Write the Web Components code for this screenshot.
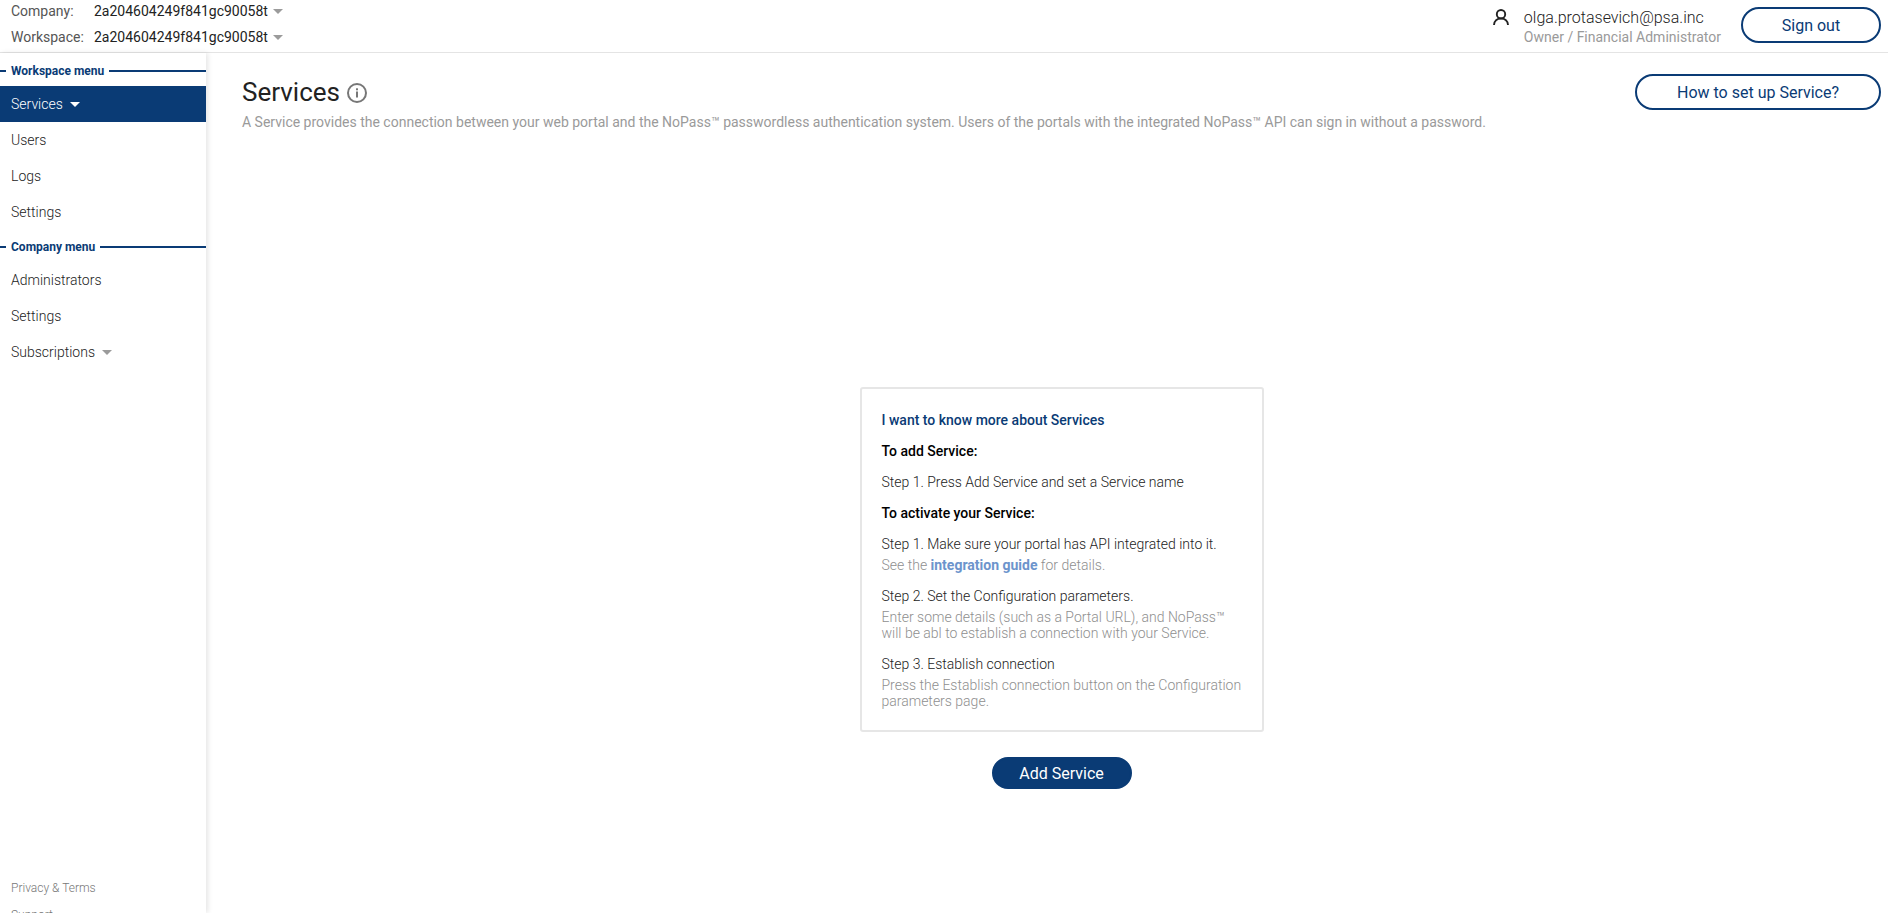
<!DOCTYPE html>
<html lang="en">
<head>
<meta charset="utf-8">
<title>Services</title>
<style>
    html, body {
        margin: 0;
        height: 100%;
        overflow: hidden;
        background: #fff;
        font-family: Roboto, "Liberation Sans", sans-serif;
    }
    body {
        display: flex;
        flex-direction: column;
    }
</style>
</head>
<body>
    <app-header></app-header>
    <div style="display: flex; flex: 1; min-height: 0;">
        <side-nav></side-nav>
        <services-page></services-page>
    </div>

<script>
const caret = (color) => `<svg width="10" height="5" viewBox="0 0 10 5"><path d="M0 0h10L5 5z" fill="${color}"/></svg>`;

class PillButton extends HTMLElement {
    constructor() {
        super();
        this.attachShadow({mode: "open"});
        this.shadowRoot.innerHTML = `
            <style>
                :host {
                    display: inline-flex;
                    box-sizing: border-box;
                    align-items: center;
                    justify-content: center;
                    height: 36px;
                    border: 2px solid #0a3b75;
                    border-radius: 18px;
                    background: #fff;
                    color: #0a3b75;
                    font-size: 16px;
                    cursor: pointer;
                }
                :host([filled]) {
                    height: 32px;
                    background: #0a3b75;
                    color: #fff;
                    border-radius: 16px;
                }
            </style>
            <slot></slot>
        `;
    }
}

class AppHeader extends HTMLElement {
    constructor() {
        super();
        this.attachShadow({mode: "open"});
        this.shadowRoot.innerHTML = `
            <style>
                :host {
                    display: flex;
                    flex: none;
                    box-sizing: border-box;
                    height: 53px;
                    justify-content: space-between;
                    border-bottom: 1px solid #e4e4e4;
                    padding: 0 7px 0 11px;
                }
                .picker {
                    display: grid;
                    grid-template-columns: 83px auto;
                    grid-template-rows: 22px 30px;
                    align-items: center;
                    font-size: 14px;
                    color: #222;
                }
                .picker .key { color: #555; }
                .picker svg { margin-left: 5px; vertical-align: 2px; }
                .user {
                    display: flex;
                    align-items: flex-start;
                }
                .user svg { margin: 9px 15px 0 0; }
                .who {
                    font-size: 16px;
                    font-weight: 300;
                    line-height: 20px;
                    color: #222;
                    margin: 8px 20px 0 0;
                }
                .who small {
                    display: block;
                    font-size: 14px;
                    font-weight: 400;
                    line-height: 18px;
                    color: #9a9a9a;
                }
                pill-button { width: 140px; margin-top: 7px; }
            </style>
            <div class="picker">
                <span class="key">Company:</span><span>2a204604249f841gc90058t${caret("#9b9b9b")}</span>
                <span class="key">Workspace:</span><span>2a204604249f841gc90058t${caret("#9b9b9b")}</span>
            </div>
            <div class="user">
                <svg width="16" height="16" viewBox="0 0 16 16" fill="none" stroke="#222" stroke-width="1.900">
                    <circle cx="8" cy="5.200" r="4.200"/>
                    <path d="M1 16c.2-4 3-6.500 7-6.500s6.800 2.500 7 6.500"/>
                </svg>
                <div class="who">olga.protasevich@psa.inc<small>Owner / Financial Administrator</small></div>
                <pill-button>Sign out</pill-button>
            </div>
        `;
    }
}

class NavHeading extends HTMLElement {
    constructor() {
        super();
        this.attachShadow({mode: "open"});
        this.shadowRoot.innerHTML = `
            <style>
                :host {
                    display: flex;
                    box-sizing: border-box;
                    align-items: center;
                    height: 32px;
                    padding-top: 2px;
                    gap: 5px;
                    font-size: 12px;
                    font-weight: 700;
                    color: #0a3b75;
                }
                :host::before {
                    content: "";
                    width: 6px;
                    height: 2px;
                    background: #0a3b75;
                }
                :host::after {
                    content: "";
                    flex: 1;
                    height: 2px;
                    background: #0a3b75;
                }
            </style>
            <slot></slot>
        `;
    }
}

class NavItem extends HTMLElement {
    constructor() {
        super();
        this.attachShadow({mode: "open"});
        this.shadowRoot.innerHTML = `
            <style>
                :host {
                    display: flex;
                    align-items: center;
                    height: 36px;
                    padding-left: 11px;
                    gap: 7px;
                    font-size: 14px;
                    font-weight: 300;
                    color: #222;
                }
                :host([active]) {
                    background: #0a3b75;
                    color: #fff;
                }
            </style>
            <slot></slot>
        `;
    }
}

class SideNav extends HTMLElement {
    constructor() {
        super();
        this.attachShadow({mode: "open"});
        this.shadowRoot.innerHTML = `
            <style>
                :host {
                    display: flex;
                    flex-direction: column;
                    flex: none;
                    box-sizing: border-box;
                    width: 206px;
                    height: 860px;
                    overflow: hidden;
                    box-shadow: 2px 0 5px rgba(0, 0, 0, 0.1);
                    padding-top: 1px;
                }
                .foot {
                    margin-top: auto;
                    padding-left: 11px;
                    font-size: 12px;
                    font-weight: 300;
                    color: #777;
                    line-height: 27px;
                    height: 38px;
                }
            </style>
            <nav-heading>Workspace menu</nav-heading>
            <nav-item active>Services ${caret("#fff")}</nav-item>
            <nav-item>Users</nav-item>
            <nav-item>Logs</nav-item>
            <nav-item>Settings</nav-item>
            <nav-heading>Company menu</nav-heading>
            <nav-item>Administrators</nav-item>
            <nav-item>Settings</nav-item>
            <nav-item>Subscriptions ${caret("#9b9b9b")}</nav-item>
            <div class="foot">Privacy &amp; Terms<br>Support</div>
        `;
    }
}

class InfoCard extends HTMLElement {
    constructor() {
        super();
        this.attachShadow({mode: "open"});
        this.shadowRoot.innerHTML = `
            <style>
                :host {
                    display: block;
                    box-sizing: border-box;
                    width: 404px;
                    height: 345px;
                    border: 2px solid #e6e6e6;
                    border-radius: 3px;
                    padding: 23px 18px 0 20px;
                    font-size: 14px;
                    font-weight: 300;
                    line-height: 16px;
                    color: #222;
                }
                p { margin: 0 0 15px; }
                .lead { color: #0a3b75; font-weight: 500; }
                b { font-weight: 500; color: #000; }
                .sub {
                    display: block;
                    margin-top: 5px;
                    color: #8f8f8f;
                }
                a { color: #6c94cc; font-weight: 700; text-decoration: none; }
            </style>
            <p class="lead">I want to know more about Services</p>
            <p><b>To add Service:</b></p>
            <p>Step 1. Press Add Service and set a Service name</p>
            <p><b>To activate your Service:</b></p>
            <p>Step 1. Make sure your portal has API integrated into it.
                <span class="sub">See the <a>integration guide</a> for details.</span></p>
            <p>Step 2. Set the Configuration parameters.
                <span class="sub">Enter some details (such as a Portal URL), and NoPass™<br>will be abl to establish a connection with your Service.</span></p>
            <p>Step 3. Establish connection
                <span class="sub">Press the Establish connection button on the Configuration parameters page.</span></p>
        `;
    }
}

class ServicesPage extends HTMLElement {
    constructor() {
        super();
        this.attachShadow({mode: "open"});
        this.shadowRoot.innerHTML = `
            <style>
                :host {
                    display: block;
                    flex: 1;
                    min-width: 0;
                    padding: 0 7px 0 36px;
                }
                .top {
                    display: flex;
                    height: 40px;
                    justify-content: space-between;
                    padding-top: 19px;
                }
                h1 {
                    display: flex;
                    align-items: center;
                    gap: 7px;
                    margin: 0;
                    font-size: 26px;
                    line-height: 28px;
                    font-weight: 400;
                    color: #222;
                }
                h1 svg { margin-top: 2px; }
                pill-button { width: 246px; margin-top: 2px; }
                .desc {
                    margin: 1px 0 0;
                    font-size: 14px;
                    line-height: 18px;
                    color: #9a9a9a;
                }
                .empty {
                    display: flex;
                    flex-direction: column;
                    align-items: center;
                    gap: 25px;
                    padding-top: 256px;
                }
                .empty pill-button { width: 140px; margin: 0; }
            </style>
            <div class="top">
                <h1>Services
                    <svg width="20" height="20" viewBox="0 0 20 20" fill="none">
                        <circle cx="10" cy="10" r="9" stroke="#777" stroke-width="2"/>
                        <rect x="9" y="8.500" width="2" height="6" fill="#777"/>
                        <rect x="9" y="5.300" width="2" height="2" fill="#777"/>
                    </svg>
                </h1>
                <pill-button>How to set up Service?</pill-button>
            </div>
            <p class="desc">A Service provides the connection between your web portal and the NoPass™ passwordless authentication system. Users of the portals with the integrated NoPass™ API can sign in without a password.</p>
            <div class="empty">
                <info-card></info-card>
                <pill-button filled>Add Service</pill-button>
            </div>
        `;
    }
}

customElements.define("pill-button", PillButton);
customElements.define("app-header", AppHeader);
customElements.define("nav-heading", NavHeading);
customElements.define("nav-item", NavItem);
customElements.define("side-nav", SideNav);
customElements.define("info-card", InfoCard);
customElements.define("services-page", ServicesPage);
</script>
</body>
</html>
